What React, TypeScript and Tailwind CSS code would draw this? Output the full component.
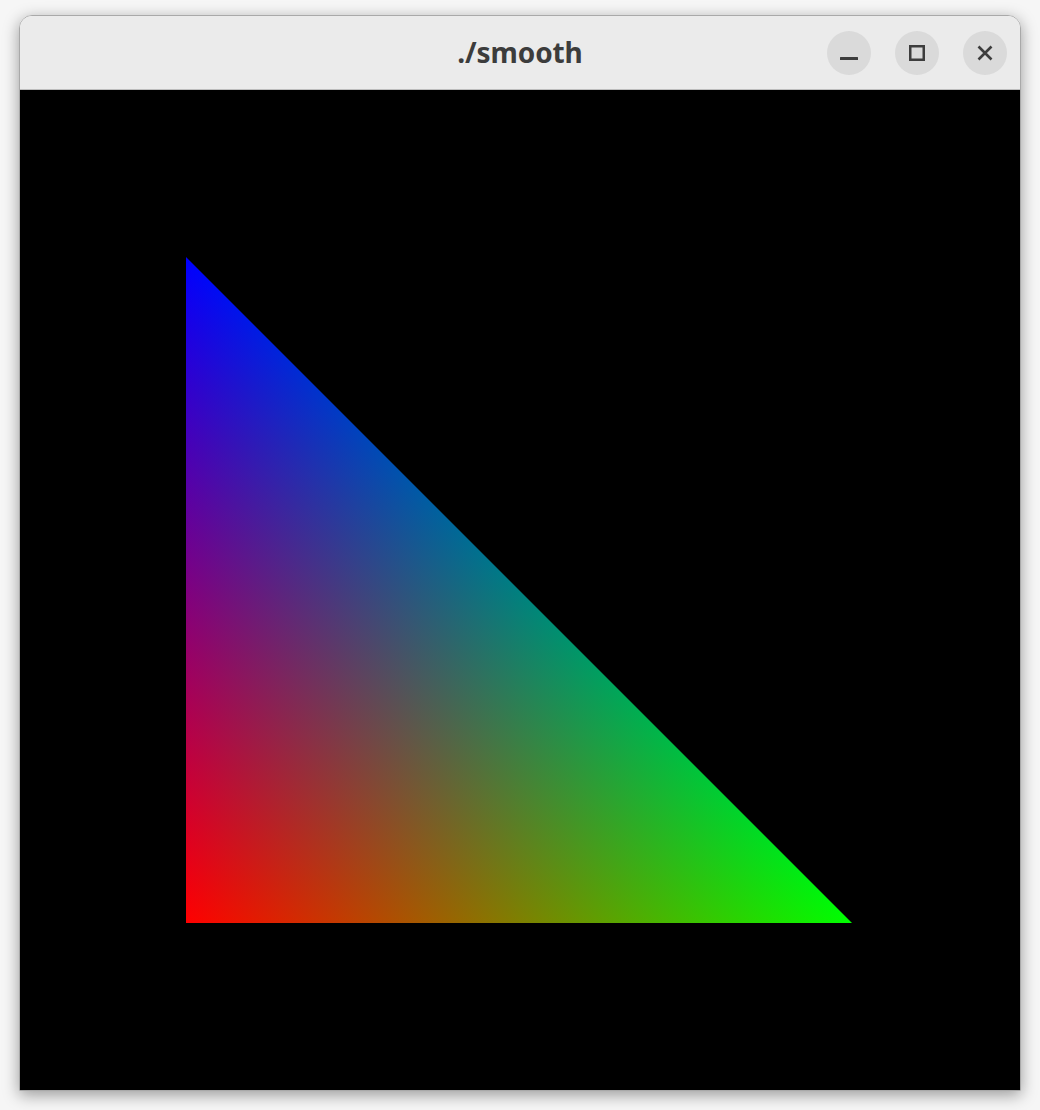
import React from "react";

export default function App() {
  return (
    <div className="w-[1040px] h-[1110px] bg-[#f6f6f6] pt-[15px] pl-[19px]">
      <div className="w-[1002px] h-[1076px] border border-[#a9a9a9] rounded-t-[13px] overflow-hidden shadow-[0_4px_16px_rgba(0,0,0,0.38)] flex flex-col">
        <div className="h-[74px] bg-[#ebebeb] border-b border-[#bdbdbd] grid grid-cols-[1fr_auto_1fr] items-center">
          <div />
          <div className="text-[28px] font-bold text-[#3c3c3c] font-['Noto_Sans',sans-serif] tracking-[-0.1px] leading-none pb-[2px]">
            ./smooth
          </div>
          <div className="flex justify-end items-center gap-[24px] pr-[13px]">
            <div className="w-[44px] h-[44px] rounded-full bg-[#dadada] flex items-center justify-center">
              <svg width="20" height="20" viewBox="0 0 20 20">
                <rect x="1" y="14" width="18" height="3" rx="0.5" fill="#3d3d3d" />
              </svg>
            </div>
            <div className="w-[44px] h-[44px] rounded-full bg-[#dadada] flex items-center justify-center">
              <svg width="20" height="20" viewBox="0 0 20 20">
                <rect x="3.25" y="3.25" width="13.5" height="13.5" fill="none" stroke="#3d3d3d" strokeWidth="2.5" />
              </svg>
            </div>
            <div className="w-[44px] h-[44px] rounded-full bg-[#dadada] flex items-center justify-center">
              <svg width="20" height="20" viewBox="0 0 20 20">
                <path d="M3.5 3.5 L16.5 16.5 M16.5 3.5 L3.5 16.5" stroke="#3d3d3d" strokeWidth="2.6" strokeLinecap="butt" />
              </svg>
            </div>
          </div>
        </div>
        <div className="h-[1000px] w-[1000px] bg-black">
          <svg width="1000" height="1000" viewBox="0 0 1000 1000" className="block isolate">
            <defs>
              <linearGradient id="gr" gradientUnits="userSpaceOnUse" x1="166" y1="833" x2="499" y2="500">
                <stop offset="0" stopColor="#ff0000" />
                <stop offset="1" stopColor="#000000" />
              </linearGradient>
              <linearGradient id="gg" gradientUnits="userSpaceOnUse" x1="832" y1="0" x2="166" y2="0">
                <stop offset="0" stopColor="#00ff00" />
                <stop offset="1" stopColor="#000000" />
              </linearGradient>
              <linearGradient id="gb" gradientUnits="userSpaceOnUse" x1="0" y1="167" x2="0" y2="833">
                <stop offset="0" stopColor="#0000ff" />
                <stop offset="1" stopColor="#000000" />
              </linearGradient>
            </defs>
            <rect x="0" y="0" width="1000" height="1000" fill="#000" />
            <polygon points="166,167 166,833 832,833" fill="url(#gr)" className="mix-blend-screen" />
            <polygon points="166,167 166,833 832,833" fill="url(#gg)" className="mix-blend-screen" />
            <polygon points="166,167 166,833 832,833" fill="url(#gb)" className="mix-blend-screen" />
          </svg>
        </div>
      </div>
    </div>
  );
}
